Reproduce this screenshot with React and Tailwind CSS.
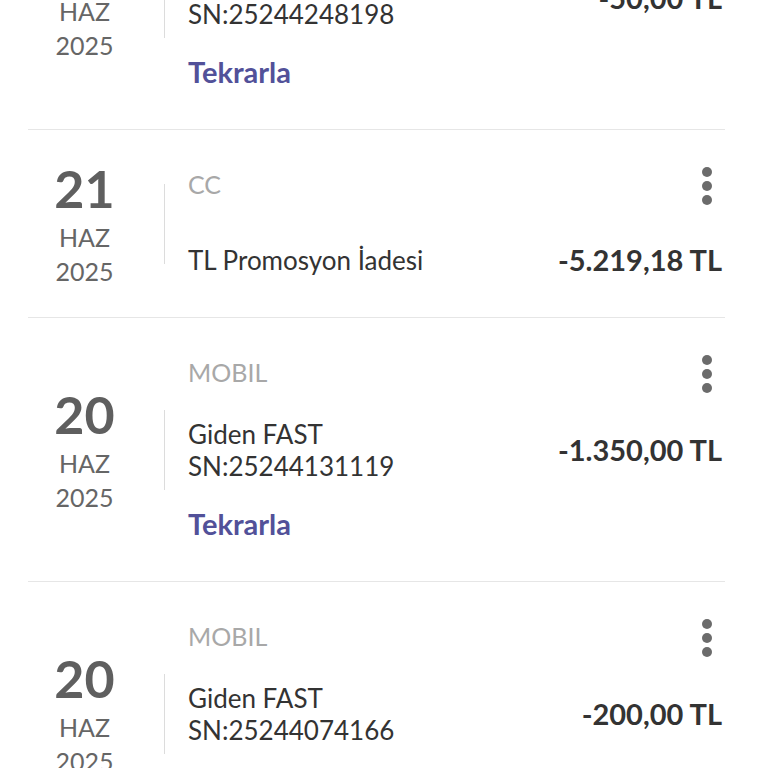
import React from 'react';

const rows = [
  { day: '20', month: 'HAZ', year: '2025', channel: 'MOBIL', desc: ['Giden FAST', 'SN:25244248198'], amount: '-50,00 TL', repeat: true },
  { day: '21', month: 'HAZ', year: '2025', channel: 'CC', desc: ['TL Promosyon İadesi'], amount: '-5.219,18 TL', repeat: false },
  { day: '20', month: 'HAZ', year: '2025', channel: 'MOBIL', desc: ['Giden FAST', 'SN:25244131119'], amount: '-1.350,00 TL', repeat: true },
  { day: '20', month: 'HAZ', year: '2025', channel: 'MOBIL', desc: ['Giden FAST', 'SN:25244074166'], amount: '-200,00 TL', repeat: true },
];

function Dots() {
  return (
    <svg width="10" height="38" viewBox="0 0 10 38" className="block">
      <circle cx="5" cy="5" r="5" fill="#6b6b6b" />
      <circle cx="5" cy="19" r="5" fill="#6b6b6b" />
      <circle cx="5" cy="33" r="5" fill="#6b6b6b" />
    </svg>
  );
}

function TransactionRow({ row }) {
  return (
    <div className="flex items-center border-b border-[#e6e6e6] pr-[3px]">
      {/* date block, centred on the row */}
      <div className="w-[113px] shrink-0 text-center">
        <div className="text-[52px] leading-[56px] font-bold text-[#5f5f5f]">{row.day}</div>
        <div className="mt-1 text-[25px] leading-[34px] text-[#666666]">{row.month}</div>
        <div className="text-[25px] leading-[34px] text-[#666666]">{row.year}</div>
      </div>

      <div className="ml-[23px] h-[80px] w-px shrink-0 bg-[#dcdcdc]"></div>

      <div className="relative ml-[23px] flex-1 pt-[39px] pb-[41px]">
        <div className="absolute right-[10px] top-[37px]">
          <Dots />
        </div>
        <div className="text-[25px] leading-[30px] text-[#a8a8a8]">{row.channel}</div>
        <div className={`flex items-center justify-between ${row.repeat ? 'mt-[31px]' : 'mt-[45px]'}`}>
          <div>
            {row.desc.map((line) => (
              <div key={line} className="text-[26px] leading-[32px] text-[#333333]">{line}</div>
            ))}
          </div>
          <div className="text-[29px] leading-[32px] font-bold text-[#333333]">{row.amount}</div>
        </div>
        {row.repeat && (
          <div className="mt-[26px] text-[29px] leading-[32px] font-bold text-[#525199]">Tekrarla</div>
        )}
      </div>
    </div>
  );
}

export default function App() {
  return (
    <div className="h-[768px] overflow-hidden bg-white" style={{ fontFamily: 'Lato, "Noto Sans", sans-serif' }}>
      <div className="-mt-[134px] ml-[28px] mr-[43px]">
        {rows.map((row, i) => (
          <TransactionRow key={i} row={row} />
        ))}
      </div>
    </div>
  );
}
